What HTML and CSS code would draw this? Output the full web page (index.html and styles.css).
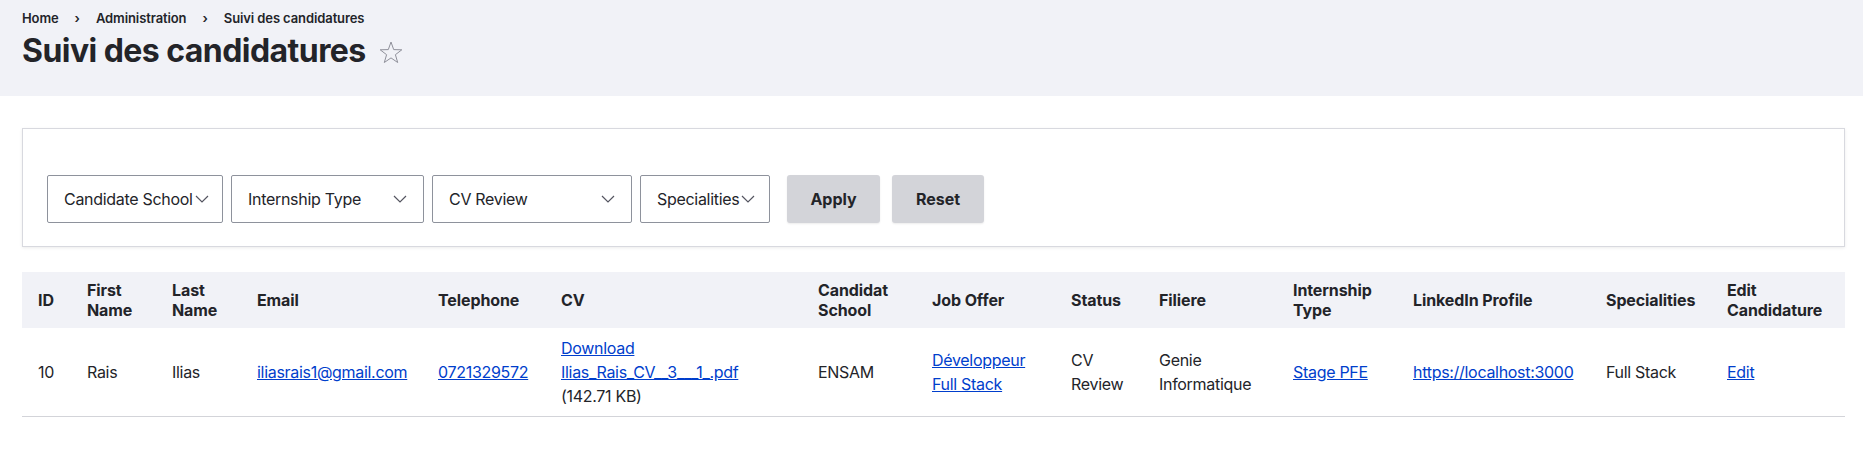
FILE: index.html
```html
<!DOCTYPE html>
<html lang="fr">
<head>
<meta charset="utf-8">
<title>Suivi des candidatures</title>
<link rel="stylesheet" href="styles.css">
</head>
<body>
<header class="page-header">
  <nav class="breadcrumb">
    <a href="#">Home</a>
    <span class="sep">›</span>
    <a href="#">Administration</a>
    <span class="sep">›</span>
    <span>Suivi des candidatures</span>
  </nav>
  <div class="title-row">
    <h1 class="page-title">Suivi des candidatures</h1>
    <svg class="star" width="24" height="23" viewBox="0 0 24 23" aria-hidden="true">
      <polygon points="12,1 14.7,8.6 22.8,8.8 16.4,13.7 18.7,21.5 12,16.9 5.3,21.5 7.6,13.7 1.2,8.8 9.3,8.6" fill="none" stroke="#8f909a" stroke-width="1" stroke-linejoin="miter"/>
    </svg>
  </div>
</header>

<main class="content">
  <form class="filter-card">
    <div class="filters">
      <div class="select s1"><span>Candidate School</span><svg class="chev" width="14" height="8" viewBox="0 0 14 8"><path d="M1 1l6 6 6-6" fill="none" stroke="#545560" stroke-width="1.2"/></svg></div>
      <div class="select s2"><span>Internship Type</span><svg class="chev" width="14" height="8" viewBox="0 0 14 8"><path d="M1 1l6 6 6-6" fill="none" stroke="#545560" stroke-width="1.2"/></svg></div>
      <div class="select s3"><span>CV Review</span><svg class="chev" width="14" height="8" viewBox="0 0 14 8"><path d="M1 1l6 6 6-6" fill="none" stroke="#545560" stroke-width="1.2"/></svg></div>
      <div class="select s4"><span>Specialities</span><svg class="chev" width="14" height="8" viewBox="0 0 14 8"><path d="M1 1l6 6 6-6" fill="none" stroke="#545560" stroke-width="1.2"/></svg></div>
      <div class="actions">
        <button type="button" class="btn btn-apply">Apply</button>
        <button type="button" class="btn btn-reset">Reset</button>
      </div>
    </div>
  </form>

  <table class="data-table">
    <colgroup>
      <col class="c-id"><col class="c-first"><col class="c-last"><col class="c-email"><col class="c-tel"><col class="c-cv"><col class="c-school"><col class="c-job"><col class="c-status"><col class="c-filiere"><col class="c-type"><col class="c-linkedin"><col class="c-spec"><col class="c-edit">
    </colgroup>
    <thead>
      <tr>
        <th>ID</th>
        <th>First Name</th>
        <th>Last Name</th>
        <th>Email</th>
        <th>Telephone</th>
        <th>CV</th>
        <th>Candidat School</th>
        <th>Job Offer</th>
        <th>Status</th>
        <th>Filiere</th>
        <th>Internship Type</th>
        <th>LinkedIn Profile</th>
        <th>Specialities</th>
        <th>Edit Candidature</th>
      </tr>
    </thead>
    <tbody>
      <tr>
        <td>10</td>
        <td>Rais</td>
        <td>Ilias</td>
        <td><a href="#">iliasrais1@gmail.com</a></td>
        <td><a href="#">0721329572</a></td>
        <td><a href="#">Download Ilias_Rais_CV__3___1_.pdf</a> (142.71 KB)</td>
        <td>ENSAM</td>
        <td><a href="#">Développeur Full Stack</a></td>
        <td>CV Review</td>
        <td>Genie Informatique</td>
        <td><a href="#">Stage PFE</a></td>
        <td><a href="#">https://localhost:3000</a></td>
        <td>Full Stack</td>
        <td><a href="#">Edit</a></td>
      </tr>
    </tbody>
  </table>
</main>
</body>
</html>
```

FILE: styles.css
```css
* { box-sizing: border-box; }

html, body {
  margin: 0;
  padding: 0;
  background: #ffffff;
  color: #232429;
  font-family: Inter, "Noto Sans", "Liberation Sans", sans-serif;
  font-size: 16px;
}

a { color: #003ecc; text-decoration: underline; }

.page-header {
  background: #f1f2f7;
  padding: 9px 18px 25px 22px;
}

.breadcrumb {
  display: flex;
  align-items: center;
  font-size: 13px;
  line-height: 18px;
  font-weight: 600;
  color: #232429;
  letter-spacing: -0.1px;
}
.breadcrumb a { color: #232429; text-decoration: none; }
.breadcrumb .sep { margin: 0 16px; font-weight: 600; }

.title-row {
  display: flex;
  align-items: center;
  margin-top: 4px;
  gap: 13px;
}
.page-title {
  margin: 0;
  font-size: 32px;
  line-height: 40px;
  font-weight: 700;
  letter-spacing: -0.55px;
  color: #232429;
}
.star { display: block; margin-top: 2px; }

.content {
  padding: 32px 18px 0 22px;
}

.filter-card {
  border: 1px solid #d8d9df;
  box-shadow: 0 1px 3px rgba(0, 0, 0, 0.08);
  background: #fff;
  padding: 46px 24px 23px 24px;
  margin: 0;
}

.filters {
  display: flex;
  align-items: center;
  gap: 8px;
}

.select {
  height: 48px;
  border: 1px solid #8e929c;
  border-radius: 2px;
  background: #fff;
  display: flex;
  align-items: center;
  justify-content: space-between;
  padding: 0 16px;
  font-size: 16px;
  letter-spacing: -0.3px;
  color: #232429;
  white-space: nowrap;
}
.select .chev { flex: none; margin-left: 2px; }
.s1 { width: 176px; }
.s2 { width: 193px; }
.s3 { width: 200px; }
.s4 { width: 130px; }

.actions {
  display: flex;
  gap: 12px;
  margin-left: 9px;
}
.btn {
  height: 48px;
  border: 0;
  border-radius: 3px;
  background: #d3d4d9;
  color: #232429;
  font-family: inherit;
  font-size: 16px;
  font-weight: 700;
  box-shadow: 0 1px 2px rgba(0, 0, 0, 0.08);
  padding: 0;
}
.btn-apply { width: 93px; }
.btn-reset { width: 92px; }

.data-table {
  margin-top: 25px;
  width: 100%;
  border-collapse: collapse;
  table-layout: fixed;
}
.data-table th {
  background: #f1f2f7;
  text-align: left;
  font-weight: 700;
  font-size: 16px;
  line-height: 20px;
  letter-spacing: -0.1px;
  padding: 8px 16px;
  vertical-align: middle;
}
.data-table td {
  font-size: 16px;
  line-height: 24px;
  letter-spacing: -0.3px;
  padding: 8px 16px;
  vertical-align: middle;
  border-bottom: 1px solid #d3d4d9;
}

.c-id { width: 49px; }
.c-first { width: 85px; }
.c-last { width: 85px; }
.c-email { width: 181px; }
.c-tel { width: 123px; }
.c-cv { width: 257px; }
.c-school { width: 114px; }
.c-job { width: 139px; }
.c-status { width: 88px; }
.c-filiere { width: 134px; }
.c-type { width: 120px; }
.c-linkedin { width: 193px; }
.c-spec { width: 121px; }
.c-edit { width: 134px; }
```
